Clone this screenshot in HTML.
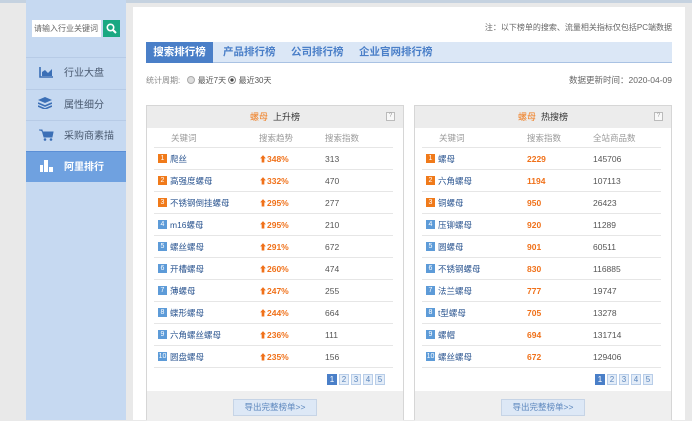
<!DOCTYPE html>
<html><head><meta charset="utf-8"><style>
*{margin:0;padding:0;box-sizing:border-box}
body{width:692px;height:420px;overflow:hidden;background:#e9e9e9;font-family:"Liberation Sans","Noto Sans CJK SC",sans-serif;font-size:9px;color:#555;position:relative}
.a{position:absolute}
.side{left:26px;top:0;width:100px;height:420px;background:#c6d9f1}
.mi{left:26px;width:100px;height:31px;border-top:1px solid #b7cbe6;font-size:10px;color:#4a5a70;line-height:31px;padding-left:38px}
.main{left:133px;top:7px;width:552px;height:413px;background:#fff}
.card{top:105px;width:258px;height:315px;border:1px solid #d6d6d6;background:#fff}
.ch{left:0;top:0;width:100%;height:22px;background:#ececec;text-align:center;line-height:22px;font-size:9px;color:#333}
.row{left:7px;width:239px;height:22px;border-bottom:1px solid #e6e6e6;line-height:22px;font-size:8.5px}
.bd{position:absolute;left:0;top:6px;width:9px;height:9px;color:#fff;font-size:7px;line-height:9px;text-align:center}
.o{background:#f07a1a}.b{background:#5d9bd8}
.kw{color:#2b5590;position:absolute;left:12px;white-space:nowrap}
.or{color:#f0711a;font-weight:bold}
.pg{top:268px;height:11px}
.pg span{display:inline-block;width:10px;height:11px;border:1px solid #b8cde8;background:#e4edf8;color:#5b86bd;font-size:8px;text-align:center;line-height:9px;margin-left:2px}
.pg span.on{background:#4a7fc8;color:#fff;border-color:#4a7fc8}
.ft{left:0;top:285px;width:100%;height:30px;background:#efefef}
.btn{top:293px;width:84px;height:17px;border:1px solid #c6d4e6;background:#dde8f6;color:#5b86bd;font-size:8.5px;text-align:center;line-height:15px}
.q{top:6px;right:8px;width:9px;height:9px;border:1px solid #bbb;font-size:6px;line-height:7px;text-align:center;color:#999;background:#f8f8f8}
</style></head><body>
<div class="a" style="left:0;top:0;width:692px;height:3px;background:#c5d2e0"></div>
<div class="a side"></div>
<div class="a" style="left:32px;top:20px;width:69px;height:17px;background:#fff;font-size:8px;line-height:17px;padding-left:2px;color:#666">请输入行业关键词</div>
<div class="a" style="left:103px;top:20px;width:17px;height:17px;background:#19a882"><svg width="17" height="17"><circle cx="7.5" cy="7.5" r="3.2" fill="none" stroke="#fff" stroke-width="1.6"/><line x1="10" y1="10" x2="13" y2="13" stroke="#fff" stroke-width="2"/></svg></div>
<div class="a mi" style="top:57px">行业大盘</div>
<svg class="a" style="left:39px;top:67px" width="14" height="11"><path d="M1 0V10H14" stroke="#3b6fb6" stroke-width="1.6" fill="none"/><path d="M3 9V5L6 3L9 6L13 2V9Z" fill="#3b6fb6"/></svg>
<div class="a mi" style="top:89px">属性细分</div>
<svg class="a" style="left:38px;top:97px" width="14" height="12"><path d="M7 0L14 3L7 6L0 3Z" fill="#3b6fb6"/><path d="M0 6L7 9L14 6M0 9L7 12L14 9" stroke="#3b6fb6" stroke-width="1.6" fill="none"/></svg>
<div class="a mi" style="top:120px">采购商素描</div>
<svg class="a" style="left:39px;top:129px" width="15" height="12"><path d="M0 1H3L5 8H13L14 3H4" fill="#3b6fb6" stroke="#3b6fb6"/><circle cx="6" cy="10.5" r="1.3" fill="#3b6fb6"/><circle cx="12" cy="10.5" r="1.3" fill="#3b6fb6"/></svg>
<div class="a mi" style="top:151px;background:#6fa1e0;color:#fff;font-weight:bold;border-top:1px solid #5b8fd6">阿里排行</div>
<svg class="a" style="left:40px;top:160px" width="13" height="12"><rect x="0" y="5" width="3" height="7" fill="#fff"/><rect x="4" y="0" width="4" height="12" fill="#fff"/><rect x="9" y="7" width="4" height="5" fill="#fff"/></svg>
<div class="a main"></div>
<div class="a" style="right:20px;top:22px;font-size:8px;color:#666">注：以下榜单的搜索、流量相关指标仅包括PC端数据</div>
<div class="a" style="left:146px;top:42px;width:526px;height:21px;background:#dbe7f6;border-bottom:1px solid #a9c2e3"></div>
<div class="a" style="left:146px;top:42px;width:67px;height:21px;background:#4a7fc8;color:#fff;font-weight:bold;font-size:10.5px;line-height:21px;text-align:center">搜索排行榜</div>
<div class="a" style="left:223px;top:42px;line-height:21px;font-size:10.5px;color:#4a7fc8;font-weight:bold">产品排行榜</div>
<div class="a" style="left:291px;top:42px;line-height:21px;font-size:10.5px;color:#4a7fc8;font-weight:bold">公司排行榜</div>
<div class="a" style="left:359px;top:42px;line-height:21px;font-size:10.5px;color:#4a7fc8;font-weight:bold">企业官网排行榜</div>
<div class="a" style="left:146px;top:75px;font-size:8px;color:#888">统计周期: <span style="display:inline-block;width:8px;height:8px;border-radius:50%;border:1px solid #aaa;background:#ddd;vertical-align:-1px;margin-left:5px"></span> <span style="color:#555">最近7天</span> <span style="display:inline-block;width:8px;height:8px;border-radius:50%;border:1px solid #888;background:radial-gradient(#444 35%,#fff 45%);vertical-align:-1px"></span> <span style="color:#555">最近30天</span></div>
<div class="a" style="right:20px;top:74px;font-size:8.5px;color:#666">数据更新时间：2020-04-09</div>

<div class="a card" style="left:146px">
<div class="a ch"><span style="color:#f07a1a">螺母</span>&nbsp;&nbsp;上升榜</div><div class="a q">?</div>
<div class="a" style="left:24px;top:22px;line-height:20px;font-size:8.5px;color:#999">关键词</div>
<div class="a" style="left:112px;top:22px;line-height:20px;font-size:8.5px;color:#999">搜索趋势</div>
<div class="a" style="left:178px;top:22px;line-height:20px;font-size:8.5px;color:#999">搜索指数</div>
<div class="a" style="left:7px;top:41px;width:239px;border-top:1px solid #e6e6e6"></div>
<div id="L"></div>
<div class="a pg" style="left:178px"><span class="on">1</span><span>2</span><span>3</span><span>4</span><span>5</span></div>
<div class="a ft"></div><div class="a btn" style="left:86px">导出完整榜单&gt;&gt;</div>
</div>

<div class="a card" style="left:414px">
<div class="a ch"><span style="color:#f07a1a">螺母</span>&nbsp;&nbsp;热搜榜</div><div class="a q">?</div>
<div class="a" style="left:24px;top:22px;line-height:20px;font-size:8.5px;color:#999">关键词</div>
<div class="a" style="left:112px;top:22px;line-height:20px;font-size:8.5px;color:#999">搜索指数</div>
<div class="a" style="left:178px;top:22px;line-height:20px;font-size:8.5px;color:#999">全站商品数</div>
<div class="a" style="left:7px;top:41px;width:239px;border-top:1px solid #e6e6e6"></div>
<div id="R"></div>
<div class="a pg" style="left:178px"><span class="on">1</span><span>2</span><span>3</span><span>4</span><span>5</span></div>
<div class="a ft"></div><div class="a btn" style="left:86px">导出完整榜单&gt;&gt;</div>
</div>
<script>
var L=[["爬丝","348%","313"],["高强度螺母","332%","470"],["不锈钢倒挂螺母","295%","277"],["m16螺母","295%","210"],["螺丝螺母","291%","672"],["开槽螺母","260%","474"],["薄螺母","247%","255"],["蝶形螺母","244%","664"],["六角螺丝螺母","236%","111"],["圆盘螺母","235%","156"]];
var R=[["螺母","2229","145706"],["六角螺母","1194","107113"],["铜螺母","950","26423"],["压铆螺母","920","11289"],["圆螺母","901","60511"],["不锈钢螺母","830","116885"],["法兰螺母","777","19747"],["t型螺母","705","13278"],["螺帽","694","131714"],["螺丝螺母","672","129406"]];
function f(id,d,ar){var h="";d.forEach(function(r,i){var t=42+i*22;h+='<div class="a row" style="top:'+t+'px"><span class="a" style="left:4px;top:0;height:22px;width:100px"><span class="bd '+(i<3?'o':'b')+'">'+(i+1)+'</span><span class="kw">'+r[0]+'</span></span><span class="a or" style="left:105px">'+(ar?'<span style="font-size:8px">&#11014;</span>':'')+r[1]+'</span><span class="a" style="left:171px">'+r[2]+'</span></div>'});document.getElementById(id).outerHTML=h;}
f("L",L,1);f("R",R,0);
</script>
</body></html>
